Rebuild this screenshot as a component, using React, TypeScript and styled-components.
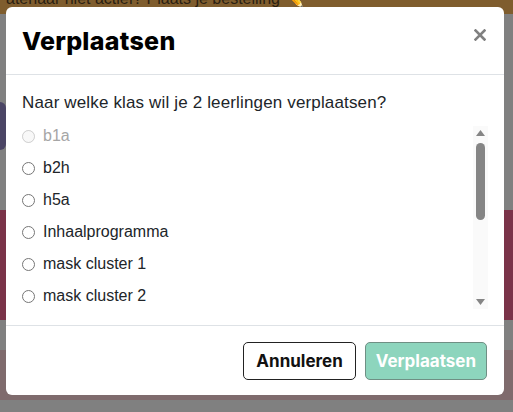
import styled, { createGlobalStyle } from "styled-components";

const GlobalStyle = createGlobalStyle`
  html, body {
    margin: 0;
    padding: 0;
    background: #808080;
    font-family: "Liberation Sans", Arial, sans-serif;
  }
`;

const Page = styled.div`
  position: relative;
  width: 513px;
  height: 412px;
  overflow: hidden;
  background: #808080;
  display: flex;
  flex-direction: column;
`;

const Banner = styled.div`
  height: 14px;
  background: #7f5d2e;
  overflow: hidden;
  white-space: nowrap;
  flex-shrink: 0;
`;

const BannerText = styled.div`
  margin: -9px 0 0 6px;
  font-size: 16px;
  line-height: 16px;
  color: #2a1f12;
`;

const Band = styled.div<{ $color: string; $height: number }>`
  height: ${(p) => p.$height}px;
  background: ${(p) => p.$color};
  flex-shrink: 0;
`;

const Blob = styled.div<{ $top: number }>`
  width: 12px;
  height: 48px;
  margin: ${(p) => p.$top}px 0 0 -6px;
  border-radius: 6px;
  background: #4b4565;
`;

const Overlay = styled.div`
  position: absolute;
  inset: 0;
  display: flex;
  align-items: flex-start;
  padding: 7px 0 0 6px;
`;

const Modal = styled.div`
  width: 498px;
  background: #fff;
  border-radius: 6px;
  display: flex;
  flex-direction: column;
  color: #212529;
`;

const Header = styled.div`
  display: flex;
  align-items: center;
  justify-content: space-between;
  padding: 16px 18px 15px 16px;
  border-bottom: 1px solid #dee2e6;
`;

const Title = styled.h2`
  margin: 0;
  font-family: Inter, "Open Sans", sans-serif;
  font-size: 25px;
  font-weight: 800;
  line-height: 36px;
  color: #000;
  letter-spacing: 0.3px;
`;

const Close = styled.button`
  border: 0;
  background: none;
  padding: 0;
  width: 12px;
  height: 12px;
  margin-top: -12px;
  display: flex;
  color: #808080;
  cursor: pointer;
`;

const Body = styled.div`
  padding: 16px;
`;

const Question = styled.p`
  margin: 0 0 11px;
  font-size: 17px;
  line-height: 24px;
  letter-spacing: 0.15px;
`;

const ListRow = styled.div`
  display: flex;
  height: 183px;
`;

const OptionList = styled.div`
  flex: 1;
  overflow-y: auto;
  scrollbar-width: none;
`;

const Option = styled.label<{ $disabled?: boolean }>`
  display: flex;
  align-items: center;
  gap: 8px;
  height: 20px;
  margin-bottom: 12px;
  font-size: 16px;
  color: ${(p) => (p.$disabled ? "#a6a6a6" : "#212529")};
`;

const Radio = styled.input`
  margin: 0;
  width: 13px;
  height: 13px;
`;

const ScrollTrack = styled.div`
  width: 15px;
  background: #fafafa;
  display: flex;
  flex-direction: column;
  align-items: center;
`;

const ScrollArrow = styled.div`
  height: 14px;
  display: flex;
  align-items: center;
  justify-content: center;
  color: #858585;
`;

const ScrollThumb = styled.div`
  width: 9px;
  height: 77px;
  margin-top: 3px;
  border-radius: 5px;
  background: #858585;
`;

const ScrollSpacer = styled.div`
  flex: 1;
`;

const Footer = styled.div`
  display: flex;
  justify-content: flex-end;
  gap: 9px;
  padding: 16px 17px 15px;
  border-top: 1px solid #dee2e6;
`;

const Button = styled.button<{ $primary?: boolean }>`
  height: 38px;
  padding: 0 ${(p) => (p.$primary ? 10 : 12)}px;
  border-radius: 5px;
  font-family: Inter, "Open Sans", sans-serif;
  font-size: 17px;
  font-weight: 700;
  border: 1px solid ${(p) => (p.$primary ? "#6f8f84" : "#222")};
  background: ${(p) => (p.$primary ? "#8dd5bd" : "#fff")};
  color: ${(p) => (p.$primary ? "#fff" : "#111")};
`;

const options = [
  "b1a",
  "b2h",
  "h5a",
  "Inhaalprogramma",
  "mask cluster 1",
  "mask cluster 2",
  "mask cluster 3",
  "mask cluster 4",
  "v1a",
  "v2b",
  "v3c",
  "v4d",
];

const Arrow = ({ down }: { down?: boolean }) => (
  <svg width="9" height="6" viewBox="0 0 9 6">
    <path d={down ? "M0 0 L4.5 6 L9 0 Z" : "M0 6 L4.5 0 L9 6 Z"} fill="currentColor" />
  </svg>
);

export default function App() {
  return (
    <>
      <GlobalStyle />
      <Page>
        <Banner>
          <BannerText>atenaar niet actief? Plaats je bestelling ✏️</BannerText>
        </Banner>
        <Band $color="#808080" $height={196}>
          <Blob $top={88} />
        </Band>
        <Band $color="#7a3349" $height={110} />
        <Band $color="#808080" $height={30} />
        <Band $color="#7f6b6d" $height={50} />
        <Overlay>
          <Modal>
            <Header>
              <Title>Verplaatsen</Title>
              <Close aria-label="Sluiten">
                <svg width="12" height="12" viewBox="0 0 12 12">
                  <path d="M1.5 1.5 L10.5 10.5 M10.5 1.5 L1.5 10.5" stroke="currentColor" strokeWidth="2.6" strokeLinecap="square" />
                </svg>
              </Close>
            </Header>
            <Body>
              <Question>Naar welke klas wil je 2 leerlingen verplaatsen?</Question>
              <ListRow>
                <OptionList>
                  {options.map((o, i) => (
                    <Option key={o} $disabled={i === 0}>
                      <Radio type="radio" name="klas" disabled={i === 0} />
                      {o}
                    </Option>
                  ))}
                </OptionList>
                <ScrollTrack>
                  <ScrollArrow>
                    <Arrow />
                  </ScrollArrow>
                  <ScrollThumb />
                  <ScrollSpacer />
                  <ScrollArrow>
                    <Arrow down />
                  </ScrollArrow>
                </ScrollTrack>
              </ListRow>
            </Body>
            <Footer>
              <Button>Annuleren</Button>
              <Button $primary>Verplaatsen</Button>
            </Footer>
          </Modal>
        </Overlay>
      </Page>
    </>
  );
}
